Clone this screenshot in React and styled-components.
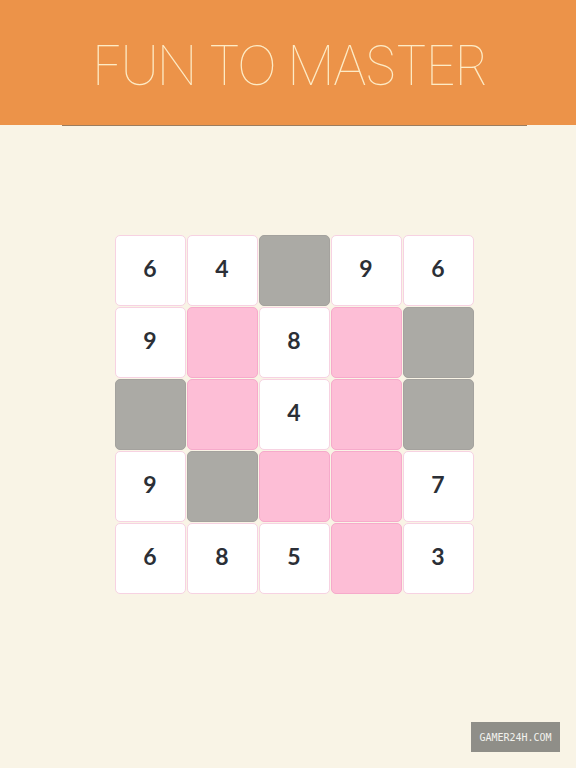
import React from "react";
import styled, { createGlobalStyle } from "styled-components";

const Global = createGlobalStyle`
  html, body { margin: 0; padding: 0; }
  body { background: #f9f4e6; width: 576px; height: 768px; overflow: hidden; }
`;

const Page = styled.div`
  width: 576px;
  height: 768px;
  background: #f9f4e6;
  display: flex;
  flex-direction: column;
  align-items: center;
  position: relative;
`;

const Header = styled.header`
  width: 100%;
  height: 125px;
  background: #ec9349;
  display: flex;
  align-items: center;
  justify-content: center;
`;

const Title = styled.h1`
  margin: 6px 0 0 0;
  font-family: Inter, "Liberation Sans", sans-serif;
  font-weight: 100;
  font-size: 54px;
  letter-spacing: -2.7px;
  color: #fdebc6;
`;

const Rule = styled.div`
  width: 465px;
  height: 1px;
  background: #9c7d5e;
  margin-left: 13px;
`;

const Board = styled.div`
  margin-top: 108px;
  margin-left: 12px;
  display: grid;
  grid-template-columns: repeat(5, 72px);
  grid-auto-rows: 72px;
`;

const colors = {
  white: { bg: "#ffffff", border: "#f7d2e2" },
  pink: { bg: "#fdbed6", border: "#f6aacb" },
  gray: { bg: "#abaaa5", border: "#a4a29e" },
};

const Cell = styled.div`
  box-sizing: border-box;
  margin: 0.5px;
  padding-bottom: 4px;
  border-radius: 5px;
  background: ${(p) => colors[p.$kind].bg};
  border: 1px solid ${(p) => colors[p.$kind].border};
  display: flex;
  align-items: center;
  justify-content: center;
  font-family: Lato, "Open Sans", sans-serif;
  font-weight: 700;
  font-size: 23px;
  color: #2b2f36;
`;

const Badge = styled.div`
  position: absolute;
  left: 471px;
  top: 722px;
  width: 89px;
  height: 30px;
  background: #8f8e88;
  color: #f2f2ee;
  font-family: "DejaVu Sans Mono", "Liberation Mono", monospace;
  font-size: 10px;
  display: flex;
  align-items: center;
  justify-content: center;
`;

const grid = [
  ["6", "4", "g", "9", "6"],
  ["9", "p", "8", "p", "g"],
  ["g", "p", "4", "p", "g"],
  ["9", "g", "p", "p", "7"],
  ["6", "8", "5", "p", "3"],
];

export default function App() {
  return (
    <Page>
      <Global />
      <Header>
        <Title>FUN TO MASTER</Title>
      </Header>
      <Rule />
      <Board>
        {grid.flat().map((v, i) => {
          const kind = v === "g" ? "gray" : v === "p" ? "pink" : "white";
          return (
            <Cell key={i} $kind={kind}>
              {kind === "white" ? v : ""}
            </Cell>
          );
        })}
      </Board>
      <Badge>GAMER24H.COM</Badge>
    </Page>
  );
}
